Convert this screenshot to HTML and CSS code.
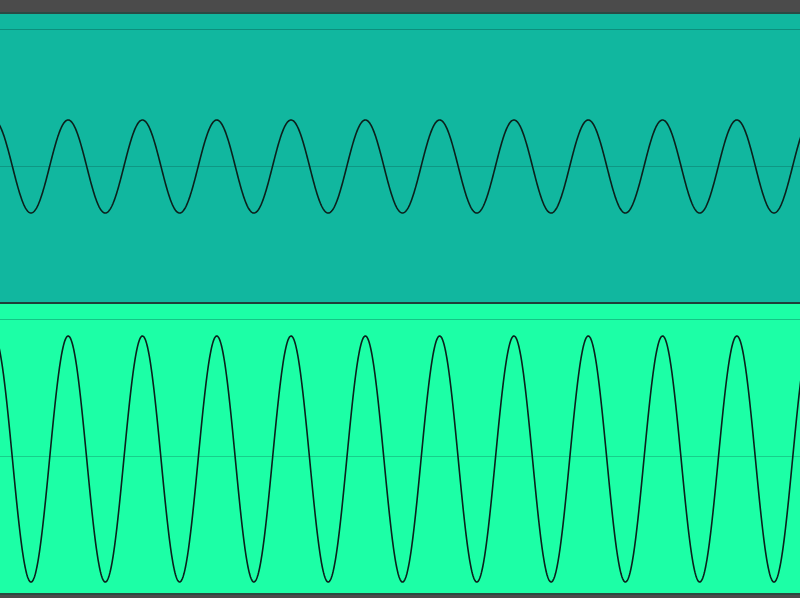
FILE: index.html
```html
<!DOCTYPE html>
<html lang="en">
<head>
    <meta charset="UTF-8">
    <meta name="viewport" content="width=device-width, initial-scale=1.0">
    <title>Tracks</title>
    <link rel="stylesheet" href="styles.css">
</head>
<body>
    <div class="topbar"></div>
    <div class="track track-teal">
        <div class="track-head"></div>
        <svg class="wave" width="800" height="272" data-amp="46.5" data-mid="136.5"></svg>
    </div>
    <div class="track track-green">
        <div class="track-head"></div>
        <svg class="wave" width="800" height="273" data-amp="123" data-mid="139"></svg>
    </div>
    <div class="bottombar"></div>

    <script>
        const period = 74.3;
        const firstTrough = 31;

        document.querySelectorAll('.wave').forEach(svg => {
            const amp = parseFloat(svg.dataset.amp);
            const mid = parseFloat(svg.dataset.mid);
            const w = svg.getAttribute('width');
            const h = svg.getAttribute('height');
            let d = '';
            for (let x = -2; x <= 802; x += 0.5) {
                const y = mid + amp * Math.cos(2 * Math.PI * (x - firstTrough) / period);
                d += (d ? ' L' : 'M') + x.toFixed(1) + ' ' + y.toFixed(2);
            }
            svg.innerHTML =
                `<line class="axis" x1="0" y1="${Math.floor(h / 2) + 0.5}" x2="${w}" y2="${Math.floor(h / 2) + 0.5}"/>` +
                `<path class="line" d="${d}"/>`;
        });
    </script>
</body>
</html>
```

FILE: styles.css
```css
body {
    margin: 0;
    width: 800px;
    height: 598px;
    overflow: hidden;
    background: #4b4b4b;
}

.topbar {
    height: 12px;
    background: #4b4b4b;
}

.track {
    display: flex;
    flex-direction: column;
}

.track-teal {
    background: #11b79f;
    border-top: 2px solid #2b4a44;
    border-bottom: 2px solid #1f3f39;
}

.track-green {
    background: #1cffa6;
    border-bottom: 2px solid #2a4a40;
}

.track-head {
    height: 15px;
}

.track-teal .track-head {
    border-bottom: 1px solid #0d8f7d;
}

.track-green .track-head {
    border-bottom: 1px solid #14c585;
}

.wave {
    display: block;
}

.wave .line {
    fill: none;
    stroke: #0b201c;
    stroke-width: 1.6;
}

.track-teal .axis {
    stroke: #0f9784;
    stroke-width: 1;
}

.track-green .axis {
    stroke: #17cf8b;
    stroke-width: 1;
}

.bottombar {
    height: 4px;
    background: #4b4b4b;
}
```
